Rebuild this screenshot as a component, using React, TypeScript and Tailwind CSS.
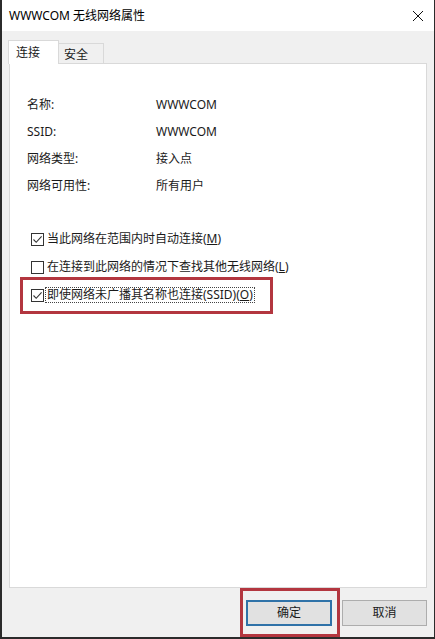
import React from "react";

const FONT = '"Noto Sans", "Noto Sans CJK SC", sans-serif';

function CheckBox({ checked }: { checked: boolean }) {
  return (
    <div className="w-[13px] h-[13px] border border-[#333333] bg-white shrink-0 flex items-center justify-center">
      {checked && (
        <svg width="11" height="11" viewBox="0 0 11 11">
          <path d="M1.5 5.5 L4.2 8.3 L9.6 2.4" fill="none" stroke="#333333" strokeWidth="1.1" />
        </svg>
      )}
    </div>
  );
}

function InfoRow({ label, value }: { label: string; value: string }) {
  return (
    <div className="flex h-[27px] items-center">
      <div className="w-[129px]">{label}</div>
      <div>{value}</div>
    </div>
  );
}

export default function App() {
  return (
    <div
      className="relative w-[435px] h-[639px] bg-[#f0f0f0] border-l-2 border-r border-b-2 border-[#2b2b2b] flex flex-col text-[12px] text-[#1a1a1a]"
      style={{ fontFamily: FONT }}
    >
      {/* title bar */}
      <div className="h-[31px] bg-white flex items-center justify-between pl-[7px] pr-[10px] shrink-0">
        <div className="text-[12px] text-black leading-none">WWWCOM 无线网络属性</div>
        <svg width="12" height="12" viewBox="0 0 12 12">
          <path d="M1 1 L11 11 M11 1 L1 11" stroke="#111" strokeWidth="1" fill="none" />
        </svg>
      </div>

      {/* body */}
      <div className="flex flex-col px-[7px] pt-[9px]">
        {/* tabs */}
        <div className="flex items-end h-[24px] -mb-px relative z-10">
          <div className="w-[51px] h-[24px] bg-white border border-[#d9d9d9] border-b-0 flex items-center pl-[7px] -ml-px">
            连接
          </div>
          <div className="w-[45px] h-[21px] bg-[#f0f0f0] border border-[#d9d9d9] border-l-0 flex items-center pl-[5px] pt-[2px]">
            安全
          </div>
        </div>
        {/* panel */}
        <div className="h-[525px] bg-white border border-[#d9d9d9] flex flex-col pl-[17px] pt-[27px]">
          <InfoRow label="名称:" value="WWWCOM" />
          <InfoRow label="SSID:" value="WWWCOM" />
          <InfoRow label="网络类型:" value="接入点" />
          <InfoRow label="网络可用性:" value="所有用户" />

          <div className="flex flex-col mt-[26px] pl-[4px]">
            <div className="flex items-center h-[28px] gap-[3px]">
              <CheckBox checked />
              <span>
                当此网络在范围内时自动连接(<span className="underline">M</span>)
              </span>
            </div>
            <div className="flex items-center h-[28px] gap-[3px]">
              <CheckBox checked={false} />
              <span>
                在连接到此网络的情况下查找其他无线网络(<span className="underline">L</span>)
              </span>
            </div>
            <div className="flex items-center h-[28px] gap-[1px]">
              <CheckBox checked />
              <span className="border border-dotted border-[#444] px-px leading-[14px]">
                即使网络未广播其名称也连接(SSID)(<span className="underline">O</span>)
              </span>
            </div>
          </div>
        </div>

        {/* buttons */}
        <div className="flex justify-end gap-[10px] mt-[12px] pr-0">
          <div className="w-[86px] h-[26px] bg-[#e1e1e1] border-2 border-[#2f72a8] flex items-center justify-center">
            确定
          </div>
          <div className="w-[85px] h-[26px] bg-[#e1e1e1] border border-[#adadad] flex items-center justify-center">
            取消
          </div>
        </div>
      </div>

      {/* annotation boxes */}
      <div className="absolute left-[18px] top-[277px] w-[253px] h-[37px] border-[3px] border-[#b3363f]" />
      <div className="absolute left-[238px] top-[588px] w-[100px] h-[49px] border-[3px] border-[#b3363f]" />
    </div>
  );
}
